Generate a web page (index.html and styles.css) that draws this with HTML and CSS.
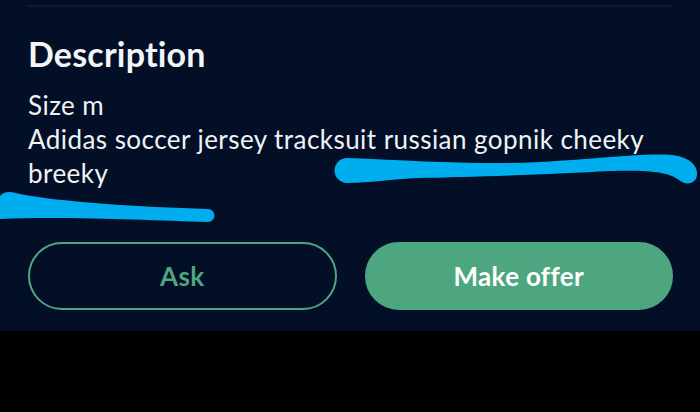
FILE: index.html
```html
<!DOCTYPE html>
<html>
<head>
<meta charset="utf-8">
<link rel="stylesheet" href="styles.css">
</head>
<body>
<div class="screen">
  <section class="panel">
    <div class="divider"></div>
    <h2 class="title">Description</h2>
    <p class="desc">Size m<br>Adidas soccer jersey tracksuit russian gopnik cheeky breeky</p>
    <div class="actions">
      <button class="btn btn-outline">Ask</button>
      <button class="btn btn-fill">Make offer</button>
    </div>
    <svg class="scribble" width="700" height="331" viewBox="0 0 700 331">
      <path d="M347 158 C 420 161, 480 165, 540 162 S 640 153, 672 155 C 690 157, 698 166, 697 175 C 696 184, 686 186, 679 180 C 668 172, 650 170, 610 171 C 560 174, 470 177, 420 178 C 390 179, 370 183, 347 183 A 12.5 12.5 0 0 1 347 158 Z" fill="#00adef"/>
      <path d="M0 196 C 4 191, 10 191, 20 194 C 60 202, 140 207, 208 209 A 6.5 6.5 0 0 1 208 222 C 150 220, 60 216, 0 219 Z" fill="#00adef"/>
    </svg>
  </section>
</div>
</body>
</html>
```

FILE: styles.css
```css
html, body {
  margin: 0;
  padding: 0;
  background: #000;
}

.screen {
  width: 700px;
  height: 412px;
  background: #000;
}

.panel {
  position: relative;
  height: 331px;
  box-sizing: border-box;
  background: #020f27;
  padding: 5px 27px 0 28px;
  font-family: Lato, "Open Sans", sans-serif;
  font-variant-ligatures: none;
  color: #f2f4f7;
}

.divider {
  height: 2px;
  background: #0c1a32;
  margin-left: -1px;
}

.title {
  margin: 27px 0 0;
  font-size: 34px;
  font-weight: 700;
  line-height: 40px;
  letter-spacing: 0.2px;
  color: #f4f5f7;
}

.desc {
  margin: 14px 0 0;
  font-size: 26px;
  line-height: 34px;
  letter-spacing: 0.45px;
  font-weight: 400;
  color: #f0f2f5;
}

.actions {
  display: flex;
  gap: 28px;
  margin-top: 52px;
}

.btn {
  flex: 1;
  height: 68px;
  border-radius: 34px;
  font-family: Lato, "Open Sans", sans-serif;
  font-variant-ligatures: none;
  font-size: 26px;
  font-weight: 700;
  letter-spacing: 0.3px;
  box-sizing: border-box;
  cursor: pointer;
  padding: 0;
}

.btn-outline {
  background: transparent;
  border: 2px solid #4ea681;
  color: #4ea681;
}

.btn-fill {
  background: #4ea681;
  border: 2px solid #4ea681;
  color: #ffffff;
}

.scribble {
  position: absolute;
  left: 0;
  top: 0;
  pointer-events: none;
}
```
